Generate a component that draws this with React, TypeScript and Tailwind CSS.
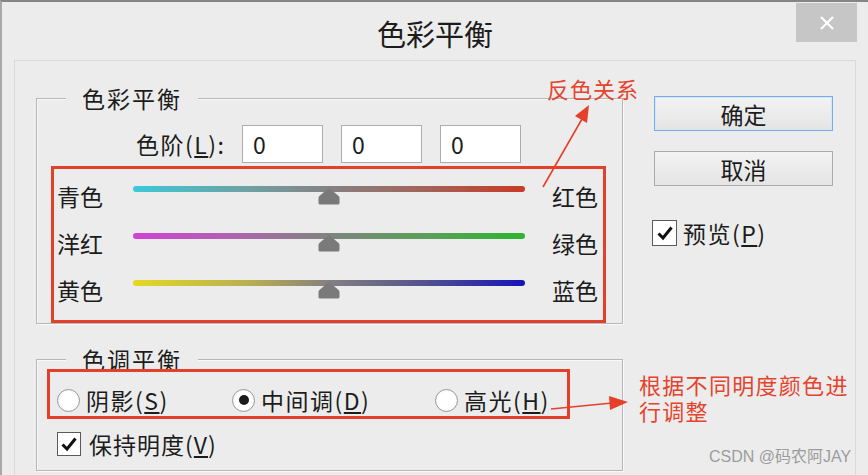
import React from "react";

const Thumb = () => (
  <svg
    width="22"
    height="17"
    viewBox="0 0 22 17"
    className="absolute left-[185px] top-[3px]"
  >
    <path
      d="M11 0.5 Q11.9 0.5 12.7 1.2 L20.6 8 Q21.5 8.8 21.5 10 L21.5 15 Q21.5 16.5 20 16.5 L2 16.5 Q0.5 16.5 0.5 15 L0.5 10 Q0.5 8.8 1.4 8 L9.3 1.2 Q10.1 0.5 11 0.5 Z"
      fill="#7a7a7a"
    />
  </svg>
);

const SliderRow = ({
  left,
  right,
  gradient,
}: {
  left: string;
  right: string;
  gradient: string;
}) => (
  <div className="h-[47px] flex items-center">
    <div className="w-[76px] text-[23px] leading-[30px]">{left}</div>
    <div className="relative w-[392px] h-[22px]">
      <div className={`mt-[1px] h-[6px] rounded-full ${gradient}`} />
      <Thumb />
    </div>
    <div className="ml-[27px] text-[23px] leading-[30px]">{right}</div>
  </div>
);

const Check = ({ size }: { size: string }) => (
  <div
    className={`${size} border border-[#5a5a5a] bg-white flex items-center justify-center`}
  >
    <svg width="18" height="16" viewBox="0 0 18 16">
      <path
        d="M2.5 8.5 L7 13 L15.5 2.5"
        fill="none"
        stroke="#111"
        strokeWidth="3"
        strokeLinejoin="miter"
      />
    </svg>
  </div>
);

const Radio = ({ on }: { on?: boolean }) => (
  <div className="w-[23px] h-[23px] rounded-full border border-[#9a9a9a] bg-[radial-gradient(circle,#ffffff_55%,#e6e6e6)] flex items-center justify-center shrink-0">
    {on && <div className="w-[10px] h-[10px] rounded-full bg-[#1a1a1a]" />}
  </div>
);

export default function App() {
  return (
    <div className="relative w-[868px] h-[475px] overflow-hidden bg-[#ececec] border-t-2 border-l-2 border-t-[#858585] border-l-[#a8a8a8] text-[#1c1c1c] font-['Noto_Sans_CJK_SC',sans-serif]">
      {/* Title bar */}
      <div className="grid grid-cols-[1fr_auto_1fr] h-[58px]">
        <div />
        <div className="self-center pt-[4px] text-[29px] leading-[36px]">
          色彩平衡
        </div>
        <div className="flex justify-end items-start pr-[11px] pt-[1px]">
          <div className="w-[61px] h-[39px] bg-[#c6c6c6] flex items-center justify-center">
            <svg width="16" height="14" viewBox="0 0 16 14">
              <path
                d="M2 1 L14 13 M14 1 L2 13"
                stroke="#ffffff"
                strokeWidth="2.2"
              />
            </svg>
          </div>
        </div>
      </div>

      {/* Panel */}
      <div className="ml-[12px] w-[842px] h-[420px] border border-[#d9d9d9] flex">
        {/* Left column */}
        <div className="pl-[21px] flex flex-col">
          {/* Group 1 */}
          <div className="mt-[37px] w-[587px] h-[226px] border border-[#b7b7b7] shadow-[inset_1px_1px_0_#f8f8f8,1px_1px_0_#f8f8f8] flex flex-col">
            <span className="-mt-[16px] ml-[29px] self-start px-[16px] bg-[#ececec] text-[23px] leading-[30px] tracking-[2px]">
              色彩平衡
            </span>
            <div className="mt-[12px] h-[38px] pl-[99px] flex items-center">
              <div className="w-[89px] shrink-0 mr-[17px] whitespace-nowrap text-[23px] leading-[30px] tracking-[1.5px]">
                色阶(<span className="underline underline-offset-2">L</span>):
              </div>
              <div className="flex gap-[18px]">
                {[0, 1, 2].map((i) => (
                  <div
                    key={i}
                    className="w-[81px] h-[38px] border border-[#adadad] bg-white pl-[10px] text-[23px] leading-[36px]"
                  >
                    0
                  </div>
                ))}
              </div>
            </div>
            <div className="mt-[3px] ml-[14px] w-[555px] h-[159px] border-[3px] border-[#e2402b] flex flex-col pt-[3px] pl-[3px]">
              <SliderRow
                left="青色"
                right="红色"
                gradient="bg-[linear-gradient(to_right,#3cc9d7,#6fa0a2_30%,#858282_50%,#a36258_75%,#c83a26)]"
              />
              <SliderRow
                left="洋红"
                right="绿色"
                gradient="bg-[linear-gradient(to_right,#d043d4,#a86aa8_30%,#7f857f_50%,#5aa05a_75%,#2db52d)]"
              />
              <SliderRow
                left="黄色"
                right="蓝色"
                gradient="bg-[linear-gradient(to_right,#e6d822,#b8ae52_30%,#858080_50%,#52508f_75%,#1414b8)]"
              />
            </div>
          </div>

          {/* Group 2 */}
          <div className="mt-[35px] w-[587px] h-[112px] border border-[#b7b7b7] shadow-[inset_1px_1px_0_#f8f8f8,1px_1px_0_#f8f8f8] flex flex-col">
            <span className="-mt-[16px] ml-[29px] self-start px-[16px] bg-[#ececec] text-[23px] leading-[30px] tracking-[2px]">
              色调平衡
            </span>
            <div className="-mt-[5px] ml-[10px] w-[523px] h-[50px] border-[3px] border-[#e2402b] flex items-center pt-[12px] pl-[7px]">
              <div className="w-[175px] flex items-center">
                <Radio />
                <span className="ml-[6px] text-[23px] leading-[30px] tracking-[1.5px]">
                  阴影(<span className="underline underline-offset-2">S</span>)
                </span>
              </div>
              <div className="w-[203px] flex items-center">
                <Radio on />
                <span className="ml-[6px] text-[23px] leading-[30px] tracking-[1.5px]">
                  中间调(<span className="underline underline-offset-2">D</span>)
                </span>
              </div>
              <div className="flex items-center">
                <Radio />
                <span className="ml-[6px] text-[23px] leading-[30px] tracking-[1.5px]">
                  高光(<span className="underline underline-offset-2">H</span>)
                </span>
              </div>
            </div>
            <div className="mt-[10px] ml-[20px] flex items-center">
              <Check size="w-[24px] h-[24px]" />
              <span className="ml-[8px] text-[23px] leading-[30px] tracking-[1px]">
                保持明度(<span className="underline underline-offset-2">V</span>)
              </span>
            </div>
          </div>
        </div>

        {/* Right column */}
        <div className="ml-[31px] mt-[35px] w-[179px] flex flex-col">
          <div className="h-[35px] border border-[#76ade4] shadow-[inset_0_0_0_1px_#d4e6f8] bg-[linear-gradient(#f3f3f3,#e4e4e4)] flex items-center justify-center text-[23px] leading-[30px]">
            确定
          </div>
          <div className="mt-[20px] h-[35px] border border-[#acacac] bg-[linear-gradient(#f3f3f3,#e4e4e4)] flex items-center justify-center text-[23px] leading-[30px]">
            取消
          </div>
          <div className="mt-[32px] -ml-[2px] flex items-center">
            <Check size="w-[25px] h-[26px]" />
            <span className="ml-[6px] text-[23px] leading-[30px] tracking-[1.5px]">
              预览(<span className="underline underline-offset-2">P</span>)
            </span>
          </div>
        </div>
      </div>

      {/* Annotations */}
      <svg
        className="absolute left-0 top-0 pointer-events-none"
        width="868"
        height="475"
        viewBox="0 0 868 475"
      >
        <line
          x1="541"
          y1="185"
          x2="580"
          y2="117"
          stroke="#e4402a"
          strokeWidth="1.6"
        />
        <polygon points="587,103 585,121 573,114" fill="#e4402a" />
        <line
          x1="549"
          y1="407"
          x2="610"
          y2="401"
          stroke="#e4402a"
          strokeWidth="1.6"
        />
        <polygon points="626,400 607,394 608,408" fill="#e4402a" />
      </svg>
      <div className="absolute left-[545px] top-[73px] text-[22px] leading-[26px] tracking-[1px] text-[#e4432d]">
        反色关系
      </div>
      <div className="absolute left-[637px] top-[369px] text-[22px] leading-[26px] tracking-[1.3px] text-[#e4432d]">
        根据不同明度颜色进
        <br />
        行调整
      </div>
      <div className="absolute left-[707px] top-[445px] text-[16px] leading-[20px] text-[#9c9c9c] font-['Liberation_Sans','Noto_Sans_CJK_SC',sans-serif]">
        CSDN @码农阿JAY
      </div>
    </div>
  );
}
